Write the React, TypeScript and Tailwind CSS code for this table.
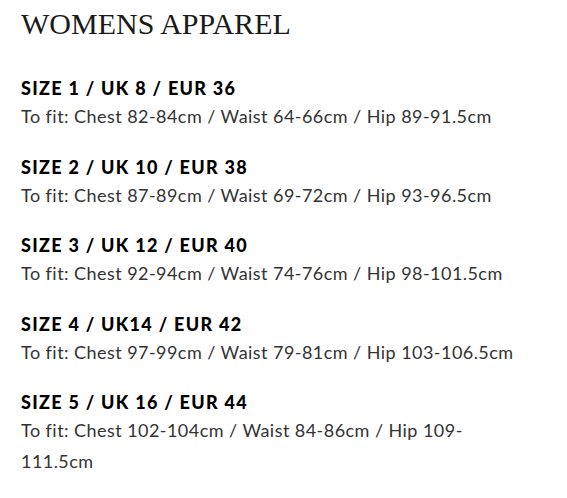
import React from "react";

const sizes = [
  { title: "SIZE 1 / UK 8 / EUR 36", fit: "To fit: Chest 82-84cm / Waist 64-66cm / Hip 89-91.5cm" },
  { title: "SIZE 2 / UK 10 / EUR 38", fit: "To fit: Chest 87-89cm / Waist 69-72cm / Hip 93-96.5cm" },
  { title: "SIZE 3 / UK 12 / EUR 40", fit: "To fit: Chest 92-94cm / Waist 74-76cm / Hip 98-101.5cm" },
  { title: "SIZE 4 / UK14 / EUR 42", fit: "To fit: Chest 97-99cm / Waist 79-81cm / Hip 103-106.5cm" },
  { title: "SIZE 5 / UK 16 / EUR 44", fit: "To fit: Chest 102-104cm / Waist 84-86cm / Hip 109-\u200B111.5cm" },
];

export default function App() {
  return (
    <div className="w-[567px] h-[498px] bg-white overflow-hidden pl-[21px] pr-[40px]">
      <h1 className="font-['Liberation_Serif',serif] text-[30px] leading-[34px] text-[#1a1a1a] pt-[7px]">
        WOMENS APPAREL
      </h1>
      <div className="mt-[35px] flex flex-col gap-[22.5px] font-['Lato',sans-serif] text-[18px]">
        {sizes.map((s) => (
          <div key={s.title}>
            <div className="font-black text-black tracking-[1.3px] leading-[25px]">{s.title}</div>
            <div className="text-[#333333] tracking-[0.45px] leading-[31px]">{s.fit}</div>
          </div>
        ))}
      </div>
    </div>
  );
}
